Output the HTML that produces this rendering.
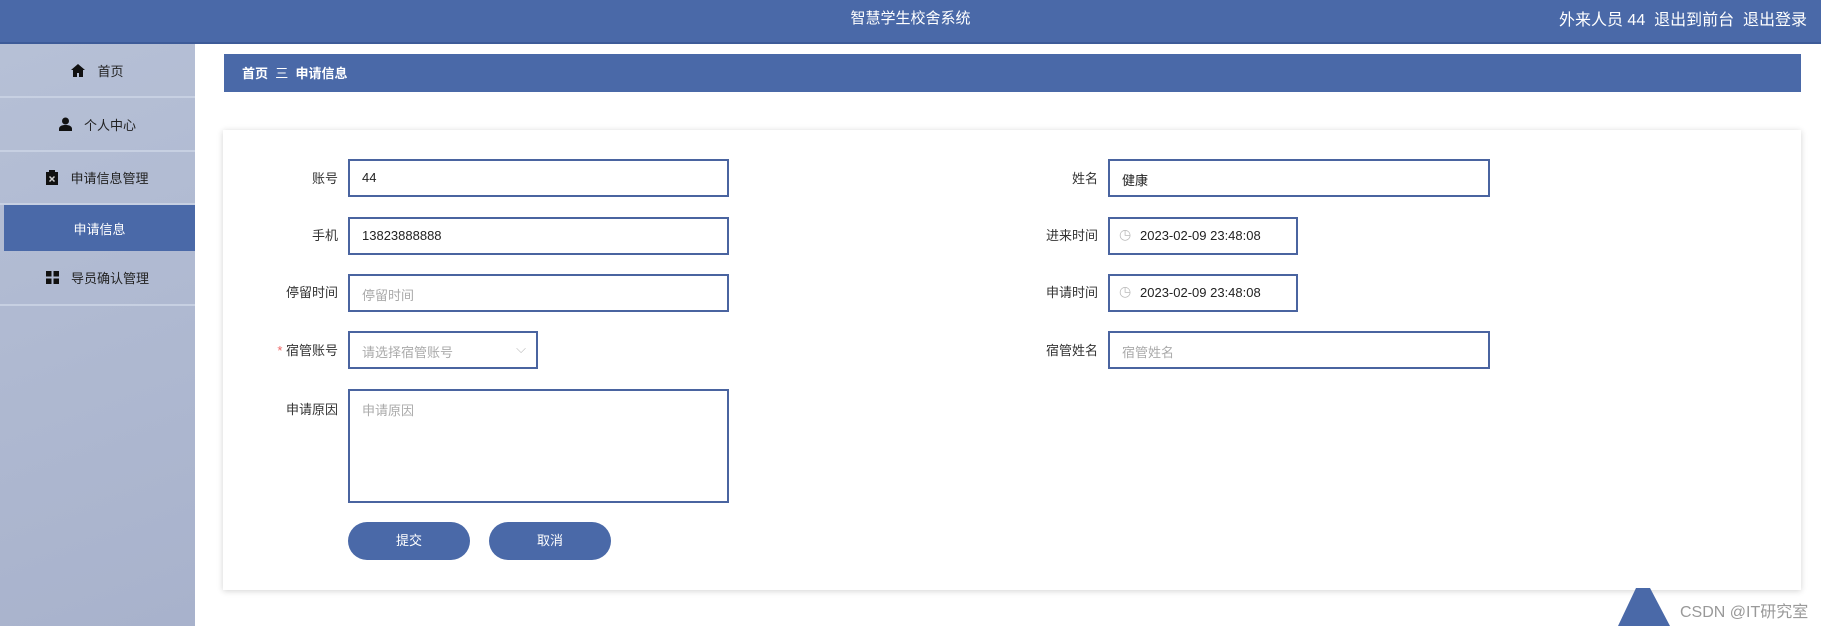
<!DOCTYPE html>
<html><head><meta charset="utf-8"><style>
*{margin:0;padding:0;box-sizing:border-box}
body{width:1821px;height:626px;overflow:hidden;background:#fff;font-family:"Liberation Sans","Noto Sans CJK SC",sans-serif;font-size:14px;color:#333;position:relative}
.hdr{position:absolute;left:0;top:0;width:1821px;height:44px;background:#4a69a8;border-bottom:2px solid #3d5b98;color:#fff}
.title{position:absolute;left:0;width:1821px;text-align:center;top:7px;font-size:15px}
.user{position:absolute;right:14px;top:6px;font-size:16px}
.side{position:absolute;left:0;top:44px;width:195px;height:582px;background:linear-gradient(160deg,#b6c0d6,#a8b2cc)}
.mi{position:absolute;left:0;width:195px;border-bottom:2px solid #c7d0e2;display:flex;align-items:center;justify-content:center;font-size:13px;color:#222}
.mi svg{margin-right:12px}
.act{background:#4a69a8;color:#fff;left:4px;width:191px;border-bottom:none}
.bc{position:absolute;left:224px;top:54px;width:1577px;height:38px;background:#4a69a8;color:#fff;font-size:13px;font-weight:bold;padding:9px 18px}
.card{position:absolute;left:223px;top:130px;width:1578px;height:460px;background:#fff;box-shadow:0 1px 6px rgba(0,0,0,.18)}
.lb{position:absolute;font-size:13px;color:#333;text-align:right;width:100px}
.in{position:absolute;border:2px solid #4a64a0;height:38px;background:#fff;font-size:13px;padding:9px 12px;color:#222}
.ph{color:#aaa}
.btn{position:absolute;top:522px;height:38px;width:122px;border-radius:19px;background:#4a69a8;color:#fff;text-align:center;line-height:38px;font-size:13px}
.ck{position:absolute;left:9px;top:7px;color:#bbb;font-size:14px}
</style></head><body>
<div class="hdr"><div class="title">智慧学生校舍系统</div><div class="user">外来人员 44&nbsp; 退出到前台&nbsp; 退出登录</div></div>
<div class="side">
<div class="mi" style="top:0;height:54px"><svg width="14" height="13" viewBox="0 0 14 13"><path d="M7 0L0 6h2v7h4V9h2v4h4V6h2z" fill="#111"/></svg>首页</div>
<div class="mi" style="top:54px;height:54px"><svg width="13" height="14" viewBox="0 0 13 14"><circle cx="6.5" cy="4" r="3.5" fill="#111"/><path d="M0 14v-2c0-3 3-4 6.5-4S13 9 13 12v2z" fill="#111"/></svg>个人中心</div>
<div class="mi" style="top:108px;height:53px"><svg width="12" height="15" viewBox="0 0 12 15"><rect x="0" y="2" width="12" height="13" fill="#111"/><rect x="3" y="0" width="6" height="3" fill="#111"/><path d="M3.5 6.5l5 5M8.5 6.5l-5 5" stroke="#ccc" stroke-width="1.5"/></svg>申请信息管理</div>
<div class="mi act" style="top:161px;height:46px">申请信息</div>
<div class="mi" style="top:207px;height:55px"><svg width="13" height="13" viewBox="0 0 13 13" fill="#111"><rect width="5.5" height="5.5"/><rect x="7.5" width="5.5" height="5.5"/><rect y="7.5" width="5.5" height="5.5"/><rect x="7.5" y="7.5" width="5.5" height="5.5"/></svg>导员确认管理</div>
</div>
<div class="bc">首页 &nbsp;<span style="font-weight:normal">三</span>&nbsp; 申请信息</div>
<div class="card"></div>
<div class="lb" style="left:238px;top:168px">账号</div>
<div class="in" style="left:348px;top:159px;width:381px">44</div>
<div class="lb" style="left:238px;top:225px">手机</div>
<div class="in" style="left:348px;top:217px;width:381px">13823888888</div>
<div class="lb" style="left:238px;top:282px">停留时间</div>
<div class="in ph" style="left:348px;top:274px;width:381px">停留时间</div>
<div class="lb" style="left:238px;top:340px"><span style="color:#e66">*</span> 宿管账号</div>
<div class="in ph" style="left:348px;top:331px;width:190px">请选择宿管账号<span style="position:absolute;right:10px;top:8px;color:#bbb">⌵</span></div>
<div class="lb" style="left:238px;top:399px">申请原因</div>
<div class="in ph" style="left:348px;top:389px;width:381px;height:114px">申请原因</div>
<div class="btn" style="left:348px">提交</div>
<div class="btn" style="left:489px">取消</div>
<div class="lb" style="left:998px;top:168px">姓名</div>
<div class="in" style="left:1108px;top:159px;width:382px">健康</div>
<div class="lb" style="left:998px;top:225px">进来时间</div>
<div class="in" style="left:1108px;top:217px;width:190px;padding-left:30px"><span class="ck">◷</span>2023-02-09 23:48:08</div>
<div class="lb" style="left:998px;top:282px">申请时间</div>
<div class="in" style="left:1108px;top:274px;width:190px;padding-left:30px"><span class="ck">◷</span>2023-02-09 23:48:08</div>
<div class="lb" style="left:998px;top:340px">宿管姓名</div>
<div class="in ph" style="left:1108px;top:331px;width:382px">宿管姓名</div>
<svg style="position:absolute;left:1618px;top:588px" width="52" height="38"><path d="M18 0h14l20 38H0z" fill="#4a69a8"/></svg>
<div style="position:absolute;left:1680px;top:598px;font-size:16px;color:#999">CSDN @IT研究室</div>
</body></html>
